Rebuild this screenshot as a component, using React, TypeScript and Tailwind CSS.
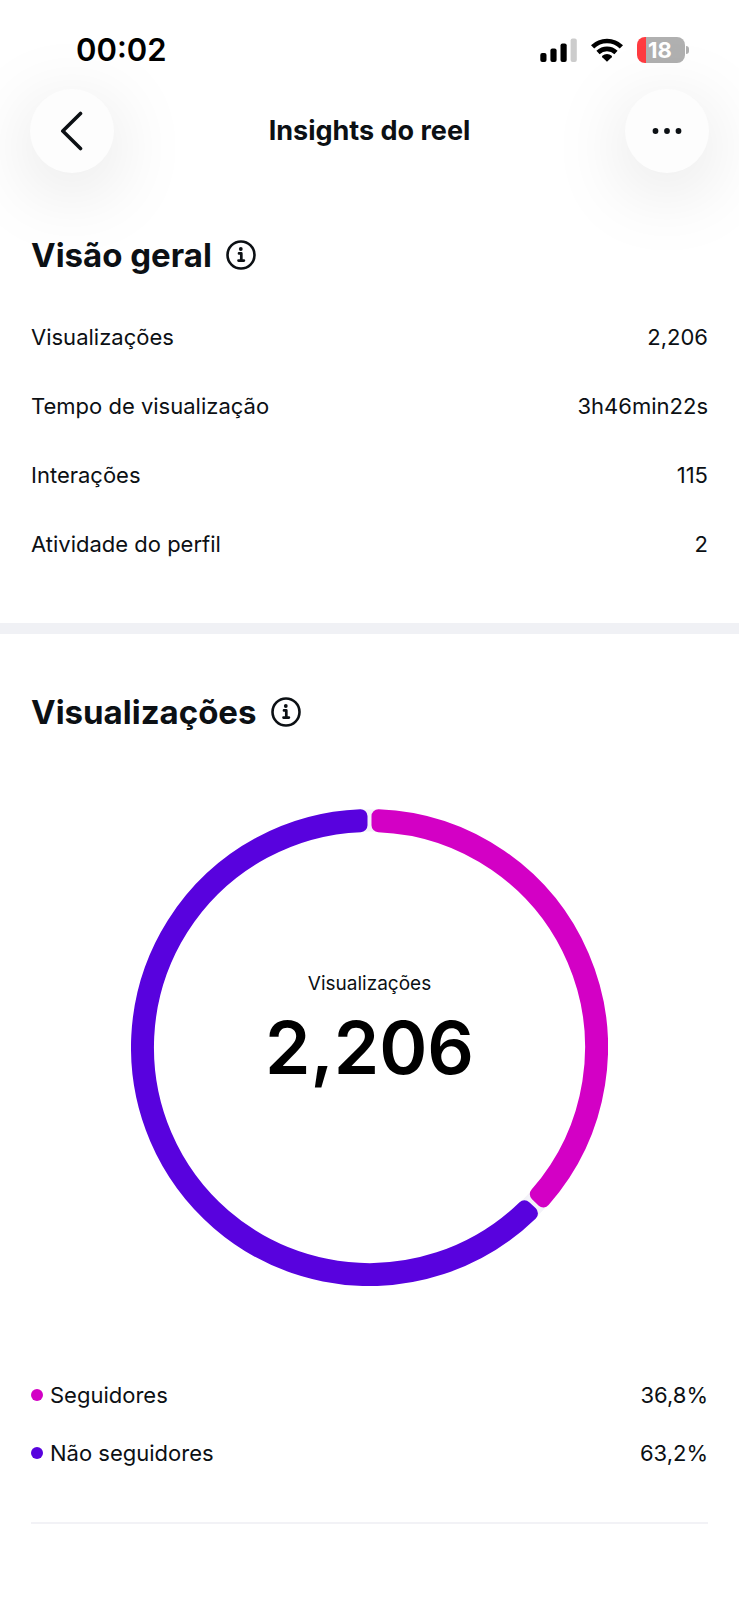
import { FC } from 'react'

interface IStat {
  label: string
  value: string
}

interface ISegment extends IStat {
  arc: number
  color: string
}

const stats: IStat[] = [
  { label: 'Visualizações', value: '2,206' },
  { label: 'Tempo de visualização', value: '3h46min22s' },
  { label: 'Interações', value: '115' },
  { label: 'Atividade do perfil', value: '2' },
]

const segments: ISegment[] = [
  { label: 'Seguidores', value: '36,8%', arc: 0.371, color: '#d300c5' },
  { label: 'Não seguidores', value: '63,2%', arc: 0.629, color: '#5802de' },
]

const OUTER = 239
const INNER = 216
const CORNER = 7
const GAP = 4

// The outline is inset by CORNER, a round-joined stroke grows it back.
const segmentPath = (from: number, to: number) => {
  const outer = OUTER - CORNER
  const inner = INNER + CORNER
  const inset = GAP / 2 + CORNER
  const start = from * 2 * Math.PI
  const end = to * 2 * Math.PI
  const large = to - from > 0.5 ? 1 : 0

  const point = (radius: number, angle: number) =>
    `${OUTER + radius * Math.sin(angle)} ${OUTER - radius * Math.cos(angle)}`

  const outerInset = Math.asin(inset / outer)
  const innerInset = Math.asin(inset / inner)

  return [
    `M${point(outer, start + outerInset)}`,
    `A${outer} ${outer} 0 ${large} 1 ${point(outer, end - outerInset)}`,
    `L${point(inner, end - innerInset)}`,
    `A${inner} ${inner} 0 ${large} 0 ${point(inner, start + innerInset)}`,
    'Z',
  ].join(' ')
}

const StatusBar: FC = () => (
  <div className="flex items-center justify-between pt-[30px] pr-[50px] pb-[19px] pl-[76px]">
    <span className="text-[31px] leading-10 font-semibold text-black">00:02</span>

    <div className="flex items-center gap-[14px]">
      <svg width="37" height="24" viewBox="0 0 37 24" aria-hidden="true">
        <rect x="0.3" y="15" width="6.2" height="9" rx="2" />
        <rect x="10.4" y="10.5" width="6.2" height="13.5" rx="2" />
        <rect x="20.5" y="5.5" width="6.2" height="18.5" rx="2" />
        <rect x="30.6" y="0.5" width="6.2" height="23.5" rx="2" fill="#cccccc" />
      </svg>

      <svg width="32" height="24" viewBox="0 0 32 24" aria-hidden="true">
        <g fill="none" stroke="#000" strokeWidth="4.6">
          <path d="M1.6 8.8a20.6 20.6 0 0 1 28.8 0" />
          <path d="M7 14.5a13 13 0 0 1 18 0" />
        </g>
        <path d="M16 23.8l4.7-4.6a1 1 0 0 0 0-1.4a7 7 0 0 0-9.4 0a1 1 0 0 0 0 1.4z" />
      </svg>

      <div className="flex items-center gap-px">
        <div className="flex h-[26px] w-12 items-center rounded-lg bg-linear-to-r from-[#ff3b40] from-19% to-[#b0b0b0] to-19% pl-[11px] text-[22px] leading-none font-bold text-white">
          18
        </div>
        <span className="h-2 w-[3px] rounded-r-full bg-[#b0b0b0]" />
      </div>
    </div>
  </div>
)

const roundButton =
  'flex size-[84px] items-center justify-center rounded-full bg-[#fdfdfd] shadow-[0_16px_80px_rgba(0,0,0,0.13)]'

const Header: FC = () => (
  <header className="flex items-center justify-between px-[30px]">
    <button type="button" aria-label="Voltar" className={roundButton}>
      <svg width="24" height="40" viewBox="0 0 24 40" aria-hidden="true">
        <path
          d="M20.5 2.5L2.8 20l17.700 17.500"
          fill="none"
          stroke="#0c1014"
          strokeWidth="3.6"
          strokeLinecap="round"
          strokeLinejoin="round"
        />
      </svg>
    </button>

    <h1 className="text-[27px] leading-8 font-bold">Insights do reel</h1>

    <button type="button" aria-label="Mais opções" className={roundButton}>
      <svg width="30" height="6" viewBox="0 0 30 6" fill="#0c1014" aria-hidden="true">
        <circle cx="3.5" cy="3" r="2.9" />
        <circle cx="15" cy="3" r="2.9" />
        <circle cx="26.5" cy="3" r="2.9" />
      </svg>
    </button>
  </header>
)

const SectionTitle: FC<{ title: string }> = ({ title }) => (
  <div className="flex items-center gap-[14px]">
    <h2 className="text-[33px] leading-10 font-bold">{title}</h2>

    <button type="button" aria-label={`Sobre ${title}`}>
      <svg width="30" height="30" viewBox="0 0 30 30" aria-hidden="true">
        <circle cx="15" cy="15" r="13.5" fill="none" stroke="#0c1014" strokeWidth="2.6" />
        <circle cx="14.8" cy="9" r="1.9" fill="#0c1014" />
        <path
          d="M13 13.4h2.3v7M12.5 20.6h5.4"
          fill="none"
          stroke="#0c1014"
          strokeWidth="2.7"
          strokeLinecap="round"
          strokeLinejoin="round"
        />
      </svg>
    </button>
  </div>
)

const Donut: FC = () => {
  let offset = 0

  return (
    <div className="mx-auto mt-[77px] grid w-full max-w-[477px] place-items-center">
      <svg viewBox="0 0 478 478" className="col-start-1 row-start-1 w-full" aria-hidden="true">
        <circle
          cx={OUTER}
          cy={OUTER}
          r={(OUTER + INNER) / 2}
          fill="none"
          stroke="#f3f2f8"
          strokeWidth={OUTER - INNER - 1}
        />
        {segments.map(({ label, arc, color }) => {
          const from = offset
          offset += arc

          return (
            <path
              key={label}
              d={segmentPath(from, offset)}
              fill={color}
              stroke={color}
              strokeWidth={CORNER * 2}
              strokeLinejoin="round"
            />
          )
        })}
      </svg>

      <div className="col-start-1 row-start-1 flex flex-col items-center pb-8">
        <span className="text-[19px] leading-6">Visualizações</span>
        <span className="mt-2 text-[73px] leading-[88px] font-semibold text-black">2,206</span>
      </div>
    </div>
  )
}

const App: FC = () => {
  return (
    <div className="min-h-screen bg-white font-['Inter','Liberation_Sans',sans-serif] text-[#0c1014]">
      <StatusBar />
      <Header />

      <main>
        <section className="px-[31px] pt-[62px] pb-[45px]">
          <SectionTitle title="Visão geral" />

          <dl className="mt-[27px] text-[22px] leading-7">
            {stats.map(({ label, value }) => (
              <div key={label} className="flex h-[69px] items-center justify-between">
                <dt>{label}</dt>
                <dd>{value}</dd>
              </div>
            ))}
          </dl>
        </section>

        <hr className="h-[11px] border-0 bg-[#f0f1f5]" />

        <section className="px-[31px] pt-[58px]">
          <SectionTitle title="Visualizações" />
          <Donut />

          <dl className="mt-20 border-b-2 border-[#f2f2f6] pb-10 text-[22px] leading-7">
            {segments.map(({ label, value, color }) => (
              <div key={label} className="flex h-[58px] items-center justify-between">
                <dt className="flex items-center gap-[7px]">
                  <span className="size-3 rounded-full" style={{ backgroundColor: color }} />
                  {label}
                </dt>
                <dd>{value}</dd>
              </div>
            ))}
          </dl>
        </section>
      </main>
    </div>
  )
}

export default App
